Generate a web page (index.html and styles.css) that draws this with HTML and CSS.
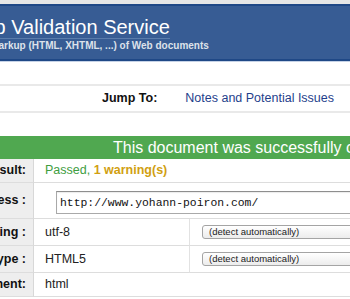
FILE: index.html
```html
<!DOCTYPE html>
<html lang="en">
<head>
    <meta charset="UTF-8">
    <meta name="viewport" content="width=device-width, initial-scale=1.0">
    <title>Markup Validation Service</title>
    <link rel="stylesheet" href="styles.css">
</head>
<body>
    <div class="page">
        <div class="banner">
            <h1 class="title">Markup Validation Service</h1>
            <p class="tagline">Check the markup (HTML, XHTML, ...) of Web documents</p>
        </div>

        <ul class="jumpbar">
            <li class="jump-label">Jump To:</li>
            <li><a href="#notes">Notes and Potential Issues</a></li>
        </ul>

        <h2 class="valid">This document was successfully checked as HTML5!</h2>

        <table class="results">
            <colgroup>
                <col class="col-label">
                <col class="col-value">
                <col class="col-option">
            </colgroup>
            <tr>
                <th>Result:</th>
                <td colspan="2" class="plain"><span class="passed">Passed,</span> <span class="warn">1 warning(s)</span></td>
            </tr>
            <tr class="address-row">
                <th>Address :</th>
                <td colspan="2" class="address"><input type="text" class="uri" value="http://www.yohann-poiron.com/"></td>
            </tr>
            <tr class="option-row">
                <th>Encoding :</th>
                <td class="split">utf-8</td>
                <td class="option"><span class="fake-select">(detect automatically)</span></td>
            </tr>
            <tr class="option-row">
                <th>Doctype :</th>
                <td class="split">HTML5</td>
                <td class="option"><span class="fake-select">(detect automatically)</span></td>
            </tr>
            <tr>
                <th>Root Element:</th>
                <td colspan="2" class="plain">html</td>
            </tr>
        </table>
    </div>
</body>
</html>
```

FILE: styles.css
```css
html, body {
    margin: 0;
    padding: 0;
    overflow: hidden;
    background: #fff;
}
body {
    font-family: "Liberation Sans", Arial, sans-serif;
    color: #222;
}
/* the page is scrolled a bit to the right */
.page {
    margin-left: -120px;
    width: 640px;
    border-top: 4px solid #e6e6e6;
}

/* banner */
.banner {
    background: #375c94;
    border-top: 2px solid #1f4886;
    border-bottom: 2px solid #1f4886;
    box-shadow: 0 1px 0 #c5d2e6;
    padding: 10px 0 8px 59px;
    height: 35px;
}
.title {
    display: inline-block;
    margin: 0;
    font-size: 20px;
    font-weight: normal;
    line-height: 22px;
    color: #fff;
    border-bottom: 1px solid #5a7cab;
}
.tagline {
    margin: 1px 0 0;
    font-size: 10px;
    font-weight: bold;
    line-height: 12px;
    color: #dde2ea;
}

/* jump bar */
.jumpbar {
    list-style: none;
    margin: 23px 0 0;
    padding: 0 0 0 222px;
    display: flex;
    gap: 28px;
    height: 25px;
    line-height: 25px;
    font-size: 12.5px;
    border-top: 2px solid #e9e9e9;
    border-bottom: 2px solid #e9e9e9;
}
.jump-label {
    font-weight: bold;
    color: #111;
}
.jumpbar a {
    color: #1f3f8c;
    text-decoration: none;
}

/* success banner */
.valid {
    margin: 23px 0 0;
    height: 22px;
    padding: 1px 0 0 233px;
    background: #50a850;
    color: #fff;
    font-size: 16px;
    font-weight: normal;
    line-height: 22px;
    white-space: nowrap;
}

/* results table */
.results {
    width: 640px;
    table-layout: fixed;
    border-collapse: separate;
    border-spacing: 0;
    font-size: 12.5px;
}
.col-label { width: 154px; }
.col-value { width: 156px; }
.results th {
    background: #eee;
    border-right: 1px solid #d8d8d8;
    border-bottom: 1px solid #ddd;
    text-align: right;
    padding: 4px 7px 4px 0;
    line-height: 15px;
    color: #111;
    white-space: nowrap;
}
.results td {
    border-bottom: 1px solid #ddd;
    padding: 4px 0 4px 11px;
    line-height: 15px;
    vertical-align: middle;
}
.passed {
    color: #3f9e3f;
}
.warn {
    color: #d19f12;
    font-weight: bold;
}
.results td.address {
    padding: 8px 0 4px 22px;
}
.uri {
    display: block;
    box-sizing: border-box;
    width: 400px;
    height: 23px;
    margin: 0;
    padding: 0 3px;
    border: 1px solid #a9a9a9;
    border-top-color: #8e8e8e;
    box-shadow: inset 0 1px 1px rgba(0,0,0,0.08);
    font-family: "Liberation Mono", "Courier New", monospace;
    font-size: 11.4px;
    color: #111;
    background: #fff;
}
.option-row td, .option-row th {
    padding-top: 6px;
    padding-bottom: 6px;
    line-height: 14px;
}
.results td.split {
    border-right: 1px solid #e2e2e2;
}
.results td.option {
    padding-left: 12px;
}
.fake-select {
    display: block;
    box-sizing: border-box;
    width: 260px;
    height: 14px;
    padding-left: 6px;
    border: 1px solid #a4a4a4;
    border-radius: 3px;
    background: linear-gradient(#fff, #ececec);
    font-size: 9.5px;
    line-height: 12px;
    color: #222;
}
```
